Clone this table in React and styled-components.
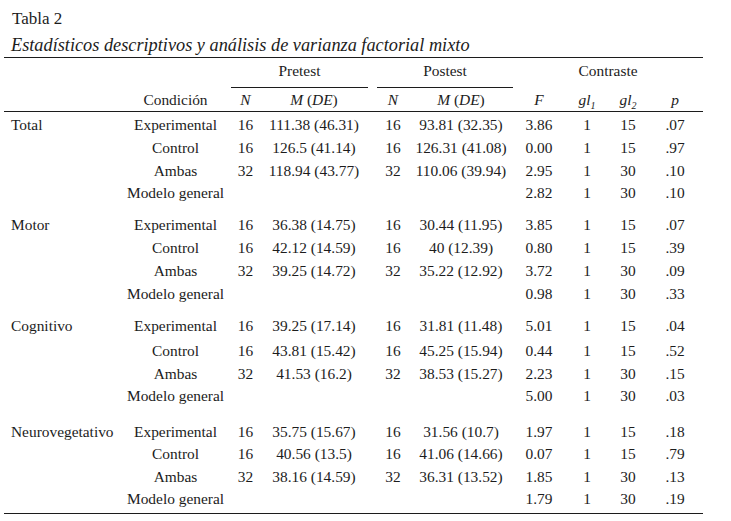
import styled, { createGlobalStyle } from "styled-components";

const GlobalStyle = createGlobalStyle`
  html, body {
    margin: 0;
    padding: 0;
    background: #fff;
  }
`;

const SERIF = `"Liberation Serif", "Times New Roman", "DejaVu Serif", serif`;

// column widths: label, cond, sp, N, M, sp, N, M, F, gl1, gl2, p
const COLS = "121px 101px 5px 29px 108px 9px 32px 104px 52px 44px 38px 56px";

const Page = styled.div`
  padding: 8px 0 0 4px;
  width: 699px;
  font-family: ${SERIF};
  font-weight: 400;
  color: #1c1c1c;
`;

const TableNo = styled.div`
  font-family: ${SERIF};
  font-size: 17px;
  line-height: 22px;
  padding-left: 8px;
`;

const Title = styled.div`
  font-family: ${SERIF};
  font-size: 18.3px;
  line-height: 23px;
  font-style: italic;
  padding-left: 7px;
  margin-top: 4px;
`;

const Grid = styled.div`
  border-top: 1px solid #1c1c1c;
  border-bottom: 1px solid #1c1c1c;
  padding-bottom: 3px;
  font-size: 15.4px;
`;

const Row = styled.div`
  display: grid;
  grid-template-columns: ${COLS};
  height: 22px;
  line-height: 22px;
  margin-top: ${(p) => p.$top || 0}px;
  border-bottom: ${(p) => (p.$rule ? "1px solid #1c1c1c" : "none")};
`;

const Cell = styled.div`
  grid-column: ${(p) => p.$col} / span ${(p) => p.$span || 1};
  display: flex;
  justify-content: ${(p) => (p.$left ? "flex-start" : "center")};
  padding-left: ${(p) => (p.$left ? "7px" : "0")};
  white-space: nowrap;
  font-family: ${SERIF};
  font-style: ${(p) => (p.$italic ? "italic" : "normal")};
`;

const SpanHead = styled(Cell)`
  position: relative;
  &::after {
    content: "";
    display: ${(p) => (p.$line ? "block" : "none")};
    position: absolute;
    left: 0;
    right: 0;
    bottom: -6px;
    border-bottom: 1px solid #1c1c1c;
  }
`;

const Text = styled.span`
  font-style: normal;
`;

const I = styled.i`
  font-style: italic;
`;

const Sub = styled.sub`
  font-size: 10px;
  line-height: 0;
  vertical-align: -4px;
  font-style: italic;
`;

const groups = [
  {
    name: "Total",
    rows: [
      ["Experimental", "16", "111.38 (46.31)", "16", "93.81 (32.35)", "3.86", "1", "15", ".07"],
      ["Control", "16", "126.5 (41.14)", "16", "126.31 (41.08)", "0.00", "1", "15", ".97"],
      ["Ambas", "32", "118.94 (43.77)", "32", "110.06 (39.94)", "2.95", "1", "30", ".10"],
      ["Modelo general", "", "", "", "", "2.82", "1", "30", ".10"],
    ],
    gaps: [2, 1, 1, 0],
  },
  {
    name: "Motor",
    rows: [
      ["Experimental", "16", "36.38 (14.75)", "16", "30.44 (11.95)", "3.85", "1", "15", ".07"],
      ["Control", "16", "42.12 (14.59)", "16", "40 (12.39)", "0.80", "1", "15", ".39"],
      ["Ambas", "32", "39.25 (14.72)", "32", "35.22 (12.92)", "3.72", "1", "30", ".09"],
      ["Modelo general", "", "", "", "", "0.98", "1", "30", ".33"],
    ],
    gaps: [10, 1, 1, 1],
  },
  {
    name: "Cognitivo",
    rows: [
      ["Experimental", "16", "39.25 (17.14)", "16", "31.81 (11.48)", "5.01", "1", "15", ".04"],
      ["Control", "16", "43.81 (15.42)", "16", "45.25 (15.94)", "0.44", "1", "15", ".52"],
      ["Ambas", "32", "41.53 (16.2)", "32", "38.53 (15.27)", "2.23", "1", "30", ".15"],
      ["Modelo general", "", "", "", "", "5.00", "1", "30", ".03"],
    ],
    gaps: [10, 3, 1, 0],
  },
  {
    name: "Neurovegetativo",
    rows: [
      ["Experimental", "16", "35.75 (15.67)", "16", "31.56 (10.7)", "1.97", "1", "15", ".18"],
      ["Control", "16", "40.56 (13.5)", "16", "41.06 (14.66)", "0.07", "1", "15", ".79"],
      ["Ambas", "32", "38.16 (14.59)", "32", "36.31 (13.52)", "1.85", "1", "30", ".13"],
      ["Modelo general", "", "", "", "", "1.79", "1", "30", ".19"],
    ],
    gaps: [14, 0, 1, 0],
  },
];

// grid column (1-based) for each data value after the label
const DATA_COLS = [2, 4, 5, 7, 8, 9, 10, 11, 12];

function App() {
  return (
    <Page>
      <GlobalStyle />
      <TableNo>Tabla 2</TableNo>
      <Title>Estadísticos descriptivos y análisis de varianza factorial mixto</Title>
      <Grid>
        <Row $top={2}>
          <SpanHead $col={4} $span={2} $line>Pretest</SpanHead>
          <SpanHead $col={7} $span={2} $line>Postest</SpanHead>
          <SpanHead $col={9} $span={4}>Contraste</SpanHead>
        </Row>
        <Row $top={7} $rule>
          <Cell $col={2}>Condición</Cell>
          <Cell $col={4} $italic>N</Cell>
          <Cell $col={5}>
            <span>
              <I>M</I> (<I>DE</I>)
            </span>
          </Cell>
          <Cell $col={7} $italic>N</Cell>
          <Cell $col={8}>
            <span>
              <I>M</I> (<I>DE</I>)
            </span>
          </Cell>
          <Cell $col={9} $italic>F</Cell>
          <Cell $col={10}>
            <span>
              <I>gl</I>
              <Sub>1</Sub>
            </span>
          </Cell>
          <Cell $col={11}>
            <span>
              <I>gl</I>
              <Sub>2</Sub>
            </span>
          </Cell>
          <Cell $col={12} $italic>p</Cell>
        </Row>
        {groups.map((g) =>
          g.rows.map((r, i) => (
            <Row key={g.name + i} $top={g.gaps[i]}>
              {i === 0 && (
                <Cell $col={1} $left>
                  <Text>{g.name}</Text>
                </Cell>
              )}
              {r.map((v, j) => (
                <Cell key={j} $col={DATA_COLS[j]}>
                  <Text>{v}</Text>
                </Cell>
              ))}
            </Row>
          ))
        )}
      </Grid>
    </Page>
  );
}

export default App;
